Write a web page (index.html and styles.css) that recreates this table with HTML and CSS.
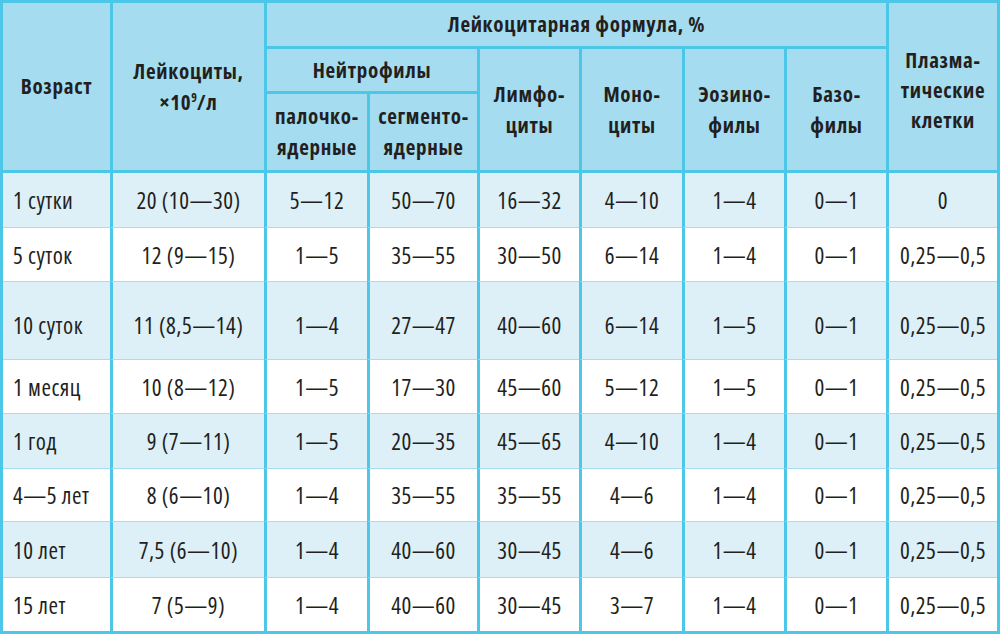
FILE: index.html
```html
<!DOCTYPE html>
<html lang="ru">
<head>
<meta charset="utf-8">
<title>Лейкоцитарная формула</title>
<link rel="stylesheet" href="styles.css">
</head>
<body>
<table class="blood">
  <colgroup>
    <col class="c-age">
    <col class="c-leu">
    <col class="c-pal">
    <col class="c-seg">
    <col class="c-std">
    <col class="c-std2">
    <col class="c-std">
    <col class="c-std">
    <col class="c-pla">
  </colgroup>
  <thead>
    <tr class="h1">
      <th rowspan="3" class="first">Возраст</th>
      <th rowspan="3">Лейкоциты,<br>×10<sup>9</sup>/л</th>
      <th colspan="6">Лейкоцитарная формула, %</th>
      <th rowspan="3" class="pla">Плазма-<br>тические<br>клетки</th>
    </tr>
    <tr class="h2">
      <th colspan="2" class="lead">Нейтрофилы</th>
      <th rowspan="2">Лимфо-<br>циты</th>
      <th rowspan="2">Моно-<br>циты</th>
      <th rowspan="2">Эозино-<br>филы</th>
      <th rowspan="2">Базо-<br>филы</th>
    </tr>
    <tr class="h3">
      <th class="lead">палочко-<br>ядерные</th>
      <th>сегменто-<br>ядерные</th>
    </tr>
  </thead>
  <tbody>
    <tr class="odd r1">
      <td>1 сутки</td><td>20 (10—30)</td><td>5—12</td><td>50—70</td><td>16—32</td><td>4—10</td><td>1—4</td><td>0—1</td><td>0</td>
    </tr>
    <tr class="r2">
      <td>5 суток</td><td>12 (9—15)</td><td>1—5</td><td>35—55</td><td>30—50</td><td>6—14</td><td>1—4</td><td>0—1</td><td>0,25—0,5</td>
    </tr>
    <tr class="odd r3">
      <td>10 суток</td><td>11 (8,5—14)</td><td>1—4</td><td>27—47</td><td>40—60</td><td>6—14</td><td>1—5</td><td>0—1</td><td>0,25—0,5</td>
    </tr>
    <tr class="r4">
      <td>1 месяц</td><td>10 (8—12)</td><td>1—5</td><td>17—30</td><td>45—60</td><td>5—12</td><td>1—5</td><td>0—1</td><td>0,25—0,5</td>
    </tr>
    <tr class="odd r5">
      <td>1 год</td><td>9 (7—11)</td><td>1—5</td><td>20—35</td><td>45—65</td><td>4—10</td><td>1—4</td><td>0—1</td><td>0,25—0,5</td>
    </tr>
    <tr class="r6">
      <td>4—5 лет</td><td>8 (6—10)</td><td>1—4</td><td>35—55</td><td>35—55</td><td>4—6</td><td>1—4</td><td>0—1</td><td>0,25—0,5</td>
    </tr>
    <tr class="odd r7">
      <td>10 лет</td><td>7,5 (6—10)</td><td>1—4</td><td>40—60</td><td>30—45</td><td>4—6</td><td>1—4</td><td>0—1</td><td>0,25—0,5</td>
    </tr>
    <tr class="r8 last">
      <td>15 лет</td><td>7 (5—9)</td><td>1—4</td><td>40—60</td><td>30—45</td><td>3—7</td><td>1—4</td><td>0—1</td><td>0,25—0,5</td>
    </tr>
  </tbody>
</table>
</body>
</html>
```
FILE: styles.css
```css
* { box-sizing: border-box; }

html, body {
  margin: 0;
  padding: 0;
  background: #ffffff;
}

.blood {
  width: 1000px;
  height: 634px;
  table-layout: fixed;
  border-collapse: separate;
  border-spacing: 0;
  border: 3px solid #4dc7e8;
  color: #231f20;
  font-family: "Open Sans", "DejaVu Sans Condensed", sans-serif;
  font-stretch: condensed;
}

.c-age { width: 107px; }
.c-leu { width: 154px; }
.c-pal { width: 103px; }
.c-seg { width: 110px; }
.c-std { width: 102px; }
.c-std2 { width: 103px; }
.c-pla { width: 111px; }

th, td {
  padding: 0;
  border-left: 3px solid #4dc7e8;
  text-align: center;
  vertical-align: middle;
}

th.first,
tbody td:first-child {
  border-left: 0;
}

th {
  background: #a5dcf0;
  font-weight: bold;
  font-size: 21px;
  letter-spacing: 0.7px;
  line-height: 31px;
  border-bottom: 3px solid #4dc7e8;
}

th sup {
  font-size: 12px;
  line-height: 0;
  vertical-align: 8px;
  letter-spacing: 0;
}

.h1 { height: 46px; }
.h2 { height: 45px; }
.h3 { height: 79px; }

.pla { line-height: 30px; padding-top: 6px; }

td {
  font-size: 23px;
  letter-spacing: 0.5px;
  line-height: 26px;
  background: #ffffff;
  border-bottom: 1px solid #a6def1;
}

tr.odd td { background: #ddf0f8; }

tbody td:first-child {
  text-align: left;
  padding-left: 10px;
}

tr.last td { border-bottom: 0; }

.r1 { height: 55px; }
.r2 { height: 54px; }
.r3 { height: 78px; }
.r3 td { padding-top: 8px; }
.r4 { height: 54px; }
.r5 { height: 55px; }
.r6 { height: 53px; }
.r7 { height: 56px; }
.r8 { height: 53px; }
```
